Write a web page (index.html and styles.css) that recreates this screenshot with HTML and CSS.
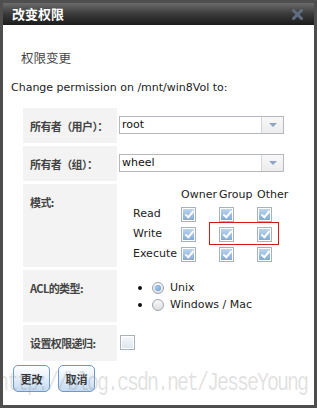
FILE: index.html
```html
<!DOCTYPE html>
<html lang="zh">
<head>
<meta charset="utf-8">
<link rel="stylesheet" href="styles.css">
</head>
<body>
<div class="dialog">
  <div class="titlebar">
    <span class="title">改变权限</span>
    <svg class="close" width="11" height="11" viewBox="0 0 11 11">
      <path d="M1.5 1.5 L9.5 9.5 M9.5 1.5 L1.5 9.5" stroke="#5f6d80" stroke-width="3" stroke-linecap="square"/>
    </svg>
  </div>
  <div class="body">
    <div class="subtitle">权限变更</div>
    <div class="intro">Change permission on /mnt/win8Vol to:</div>
    <div class="form">
      <div class="label">所有者（用户）：</div>
      <div class="value">
        <div class="select"><span class="sel-text">root</span><span class="sel-btn"><span class="tri"></span></span></div>
      </div>
      <div class="label">所有者（组）：</div>
      <div class="value">
        <div class="select"><span class="sel-text">wheel</span><span class="sel-btn"><span class="tri"></span></span></div>
      </div>
      <div class="label">模式:</div>
      <div class="value mode">
        <div class="perm">
          <span></span><span class="head">Owner</span><span class="head">Group</span><span class="head">Other</span>
          <span class="rl">Read</span><span class="cell"><span class="cb on"></span></span><span class="cell"><span class="cb on"></span></span><span class="cell"><span class="cb on"></span></span>
          <span class="rl">Write</span><span class="cell"><span class="cb on"></span></span><span class="cell"><span class="cb on"></span></span><span class="cell"><span class="cb on"></span></span>
          <span class="rl">Execute</span><span class="cell"><span class="cb on"></span></span><span class="cell"><span class="cb on"></span></span><span class="cell"><span class="cb on"></span></span>
          <div class="mark"></div>
        </div>
      </div>
      <div class="label">ACL的类型:</div>
      <div class="value acl">
        <div class="opt"><span class="dot"></span><span class="radio on"></span><span>Unix</span></div>
        <div class="opt"><span class="dot"></span><span class="radio"></span><span>Windows / Mac</span></div>
      </div>
      <div class="label">设置权限递归:</div>
      <div class="value rec"><span class="cb"></span></div>
    </div>
    <div class="buttons">
      <button class="btn">更改</button>
      <button class="btn">取消</button>
    </div>
  </div>
  <div class="watermark">http://blog.csdn.net/JesseYoung</div>
</div>
</body>
</html>
```
FILE: styles.css
```css
html, body { margin: 0; padding: 0; background: #fff; }
.dialog {
  position: relative;
  box-sizing: border-box;
  width: 317px;
  height: 408px;
  border: 3px solid #4e4e4e;
  background: #fff;
  overflow: hidden;
  font-family: "DejaVu Sans", sans-serif;
  font-size: 11px;
  color: #222;
}
.titlebar {
  height: 22px;
  display: flex;
  align-items: center;
  padding: 0 11px 0 9px;
  background: linear-gradient(#6b6b6b, #3a3a3a 50%, #1c1c1c);
}
.title {
  font-family: "Noto Sans CJK SC", sans-serif;
  font-weight: bold;
  font-size: 13px;
  color: #fff;
  line-height: 16px;
}
.close { margin-left: auto; }
.body { padding: 0 0 0 8px; }
.subtitle {
  font-family: "Noto Sans CJK SC", sans-serif;
  font-size: 12.5px;
  line-height: 16px;
  color: #444;
  padding: 25px 0 0 10px;
}
.intro { margin-top: 15px; line-height: 14px; color: #222; }
.form {
  margin: 13px 0 0 12px;
  display: grid;
  grid-template-columns: 94px 190px;
  grid-template-rows: 35px 35px 83px 52px 36px;
  column-gap: 2px;
  row-gap: 3px;
}
.label {
  background: #f3f3f3;
  font-family: "Noto Sans CJK SC", sans-serif;
  font-weight: bold;
  font-size: 11px;
  line-height: 14px;
  color: #444;
  padding: 11px 0 0 7px;
  white-space: nowrap;
  letter-spacing: -0.6px;
}
.value { position: relative; }
.select {
  margin-top: 8px;
  box-sizing: border-box;
  width: 165px;
  height: 18px;
  border: 1px solid #b3b7bf;
  display: flex;
  background: #fff;
}
.sel-text { flex: 1; padding-left: 2px; line-height: 16px; font-size: 11px; color: #111; }
.sel-btn {
  width: 21px;
  border-left: 1px solid #d5d7db;
  background: linear-gradient(#f8f8f8, #ececec);
  display: flex;
  align-items: center;
  justify-content: center;
}
.tri {
  width: 0; height: 0;
  border-left: 4px solid transparent;
  border-right: 4px solid transparent;
  border-top: 4px solid #8fa4c4;
}
.mode { padding: 4px 0 0 14px; }
.perm {
  position: relative;
  display: grid;
  grid-template-columns: 48px 38px 38px 38px;
  grid-template-rows: 15px 20px 20px 20px;
  line-height: 14px;
}
.head { color: #222; }
.rl { align-self: center; padding-top: 2px; }
.cell { display: flex; align-items: center; padding-top: 2px; }
.cb {
  position: relative;
  display: inline-block;
  box-sizing: border-box;
  width: 15px;
  height: 15px;
  border: 1px solid #a8b2be;
  background: #fff;
}
.cb::before {
  content: "";
  position: absolute;
  left: 1px; top: 1px; right: 1px; bottom: 1px;
  background: linear-gradient(#f4f7fb, #dfe7f1);
}
.cb.on::before { background: linear-gradient(#bcd5ec, #80acd8); }
.cb.on::after {
  content: "";
  position: absolute;
  left: 5px; top: 1px;
  width: 3px; height: 7px;
  border: solid #fff;
  border-width: 0 2px 2px 0;
  transform: rotate(40deg);
}
.mark {
  position: absolute;
  left: 76px;
  top: 34px;
  width: 68px;
  height: 21px;
  border: 1px solid #d81818;
}
.acl { padding-top: 9px; }
.opt { display: flex; align-items: center; height: 17px; line-height: 14px; }
.dot { width: 4px; height: 4px; border-radius: 50%; background: #111; margin: 0 10px 0 19px; }
.radio {
  position: relative;
  box-sizing: border-box;
  width: 12px; height: 12px;
  border-radius: 50%;
  border: 1px solid #9ea6b0;
  background: linear-gradient(#f8f8f8, #dedede);
  margin-right: 6px;
}
.radio.on::after {
  content: "";
  position: absolute;
  left: 2px; top: 2px;
  width: 6px; height: 6px;
  border-radius: 50%;
  background: radial-gradient(circle at 40% 40%, #a9cbee, #5e93cf);
}
.rec { padding: 10px 0 0 1px; }
.buttons { display: flex; gap: 8px; margin: 4px 0 0 2px; }
.btn {
  box-sizing: border-box;
  width: 37px;
  height: 27px;
  padding: 0;
  border: 1px solid #6f98c9;
  border-radius: 5px;
  background: linear-gradient(#ffffff, #e6f0fb 45%, #c3daf2);
  font-family: "Noto Sans CJK SC", sans-serif;
  font-weight: bold;
  font-size: 11px;
  color: #333;
}
.watermark {
  position: absolute;
  left: -6px;
  top: 366px;
  font-family: "Liberation Mono", monospace;
  font-size: 20px;
  letter-spacing: -2px;
  color: rgba(150, 150, 150, 0.28);
  transform: scaleY(1.25);
  transform-origin: left top;
  white-space: nowrap;
  pointer-events: none;
}
```
